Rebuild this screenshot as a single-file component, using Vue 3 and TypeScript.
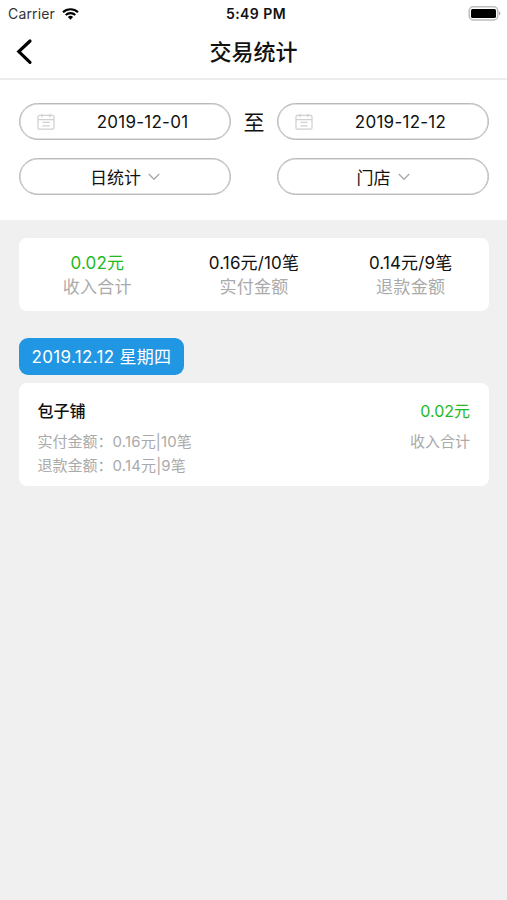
<script setup lang="ts">
interface Stat {
  value: string
  label: string
  income?: boolean
}

const dates: string[] = ['2019-12-01', '2019-12-12']
const selects: string[] = ['日统计', '门店']
const stats: Stat[] = [
  { value: '0.02元', label: '收入合计', income: true },
  { value: '0.16元/10笔', label: '实付金额' },
  { value: '0.14元/9笔', label: '退款金额' },
]
</script>

<template>
  <div class="screen">
    <header class="status">
      <div class="carrier">
        <span>Carrier</span>
        <svg class="wifi" viewBox="0 0 17 12" width="17" height="12">
          <path d="M1 4.3a10.8 10.8 0 0 1 15 0" />
          <path d="M3.7 7.1a6.9 6.9 0 0 1 9.6 0" />
          <path class="dot" d="M5.9 9a3.8 3.8 0 0 1 5.2 0L8.5 11.8z" />
        </svg>
      </div>
      <span class="clock">5:49 PM</span>
      <svg class="battery" viewBox="0 0 33 15" width="33" height="15">
        <rect x="1.2" y="0.8" width="28.6" height="13.2" rx="4" fill="none" stroke="#bdbdbd" stroke-width="1.5" />
        <rect x="3" y="2.9" width="25" height="9.2" rx="1.6" fill="#000" />
        <path d="M31.2 5.3c1.6.8 1.6 3.4 0 4.2z" fill="#999" />
      </svg>
    </header>

    <nav class="nav">
      <svg class="back" viewBox="0 0 18 28" width="18" height="28">
        <path d="M15 3 3.8 13.6 15 24.4" />
      </svg>
      <h1>交易统计</h1>
    </nav>

    <section class="filters">
      <template v-for="(date, i) in dates" :key="date">
        <span v-if="i > 0" class="to">至</span>
        <button class="pill date">
          <svg class="calendar" viewBox="0 0 18 17" width="18" height="17">
            <rect x="1" y="2.4" width="16" height="13.8" rx="1.2" />
            <path d="M1 6.6h16M5 .8v3.4M13 .8v3.4M5.4 9.4h7.2M5.4 12.8h7.2" />
          </svg>
          <span>{{ date }}</span>
        </button>
      </template>
      <button v-for="(name, i) in selects" :key="name" class="pill select" :class="{ last: i === 1 }">
        <span>{{ name }}</span>
        <svg class="chevron" viewBox="0 0 12 8" width="12" height="8">
          <path d="M.8 1 6 6.2 11.2 1" />
        </svg>
      </button>
    </section>

    <main class="content">
      <section class="card summary">
        <div v-for="s in stats" :key="s.label" class="stat">
          <span class="value" :class="{ income: s.income }">{{ s.value }}</span>
          <span class="label">{{ s.label }}</span>
        </div>
      </section>

      <div class="day">2019.12.12 星期四</div>

      <article class="card shop">
        <div class="left">
          <h2>包子铺</h2>
          <p>实付金额：<span class="figure">0.16元|10笔</span></p>
          <p>退款金额：<span class="figure">0.14元|9笔</span></p>
        </div>
        <div class="right">
          <span class="amount">0.02元</span>
          <p>收入合计</p>
        </div>
      </article>
    </main>
  </div>
</template>

<style>
body {
  background: #f0f0f0;
}
</style>

<style scoped>
.screen {
  min-height: 900px;
  background: #f0f0f0;
  color: #111;
  font-family: Inter, "Noto Sans CJK SC", sans-serif;
}
.status {
  display: grid;
  grid-template-columns: 1fr auto 1fr;
  align-items: center;
  height: 27px;
  padding: 0 6px 0 8px;
  box-sizing: border-box;
  background: #fff;
}
.carrier {
  display: flex;
  align-items: center;
  gap: 7px;
  font-size: 14px;
  letter-spacing: 0.15px;
  color: #333;
}
.wifi {
  fill: none;
  stroke: #000;
  stroke-width: 2.1;
}
.wifi .dot {
  fill: #000;
  stroke: none;
}
.clock {
  padding-left: 3px;
  font-size: 14px;
  font-weight: 600;
  letter-spacing: 0.45px;
}
.battery {
  justify-self: end;
}
.nav {
  display: grid;
  grid-template-columns: 1fr auto 1fr;
  align-items: center;
  height: 53px;
  padding: 0 15px 1px;
  box-sizing: border-box;
  border-bottom: 2px solid #ededed;
  background: #fff;
}
.back path {
  fill: none;
  stroke: #000;
  stroke-width: 3.2;
  stroke-linecap: round;
}
h1 {
  margin: 0;
  font-size: 22px;
  line-height: 30px;
  font-weight: 500;
}
.filters {
  display: grid;
  grid-template-columns: 212px 46px 212px;
  grid-template-rows: 37px 37px;
  row-gap: 18px;
  height: 140px;
  padding: 23px 18px 0 19px;
  box-sizing: border-box;
  background: #fff;
}
.pill {
  display: flex;
  align-items: center;
  justify-content: center;
  margin: 0;
  padding: 0;
  border: 1px solid #bababa;
  border-radius: 19px;
  box-shadow: inset 0 0 0 0.6px #c4c4c4;
  background: #fff;
  color: #111;
  font: inherit;
  font-size: 17px;
}
.date {
  justify-content: flex-start;
  padding-left: 17px;
  letter-spacing: 0.25px;
}
.date span {
  flex: 1;
  text-align: center;
}
.calendar {
  fill: none;
  stroke: #d0d0d0;
  stroke-width: 1.2;
}
.to {
  align-self: center;
  padding-bottom: 2px;
  text-align: center;
  font-size: 21px;
}
.select {
  gap: 7px;
}
.last {
  grid-column: 3;
}
.chevron {
  fill: none;
  stroke: #aaa;
  stroke-width: 1.4;
}
.content {
  padding: 18px 18px 0 19px;
}
.card {
  border-radius: 8px;
  background: #fff;
}
.summary {
  display: grid;
  grid-template-columns: repeat(3, 1fr);
  height: 73px;
  padding-top: 13px;
  box-sizing: border-box;
}
.stat {
  display: flex;
  flex-direction: column;
  align-items: center;
  font-size: 17px;
  line-height: 24px;
  letter-spacing: 0.15px;
}
.label {
  color: #aaa;
  letter-spacing: 0.3px;
}
.income,
.amount {
  color: #1fb922;
}
.day {
  width: 165px;
  height: 37px;
  margin: 27px 0 8px;
  padding-top: 1px;
  box-sizing: border-box;
  border-radius: 9px;
  background: #2196e3;
  color: #fff;
  font-size: 17px;
  line-height: 37px;
  letter-spacing: 0.33px;
  text-align: center;
}
.shop {
  display: flex;
  justify-content: space-between;
  height: 103px;
  padding: 16px 19px 0 18.5px;
  box-sizing: border-box;
}
h2,
.amount {
  display: block;
  margin: 0 0 6px;
  font-size: 16px;
  line-height: 25px;
  font-weight: 500;
}
.amount {
  font-weight: 400;
}
.shop p {
  margin: 0;
  color: #aaa;
  font-size: 15px;
  line-height: 24px;
}
.figure {
  letter-spacing: 0.15px;
}
.right {
  text-align: right;
}
</style>
